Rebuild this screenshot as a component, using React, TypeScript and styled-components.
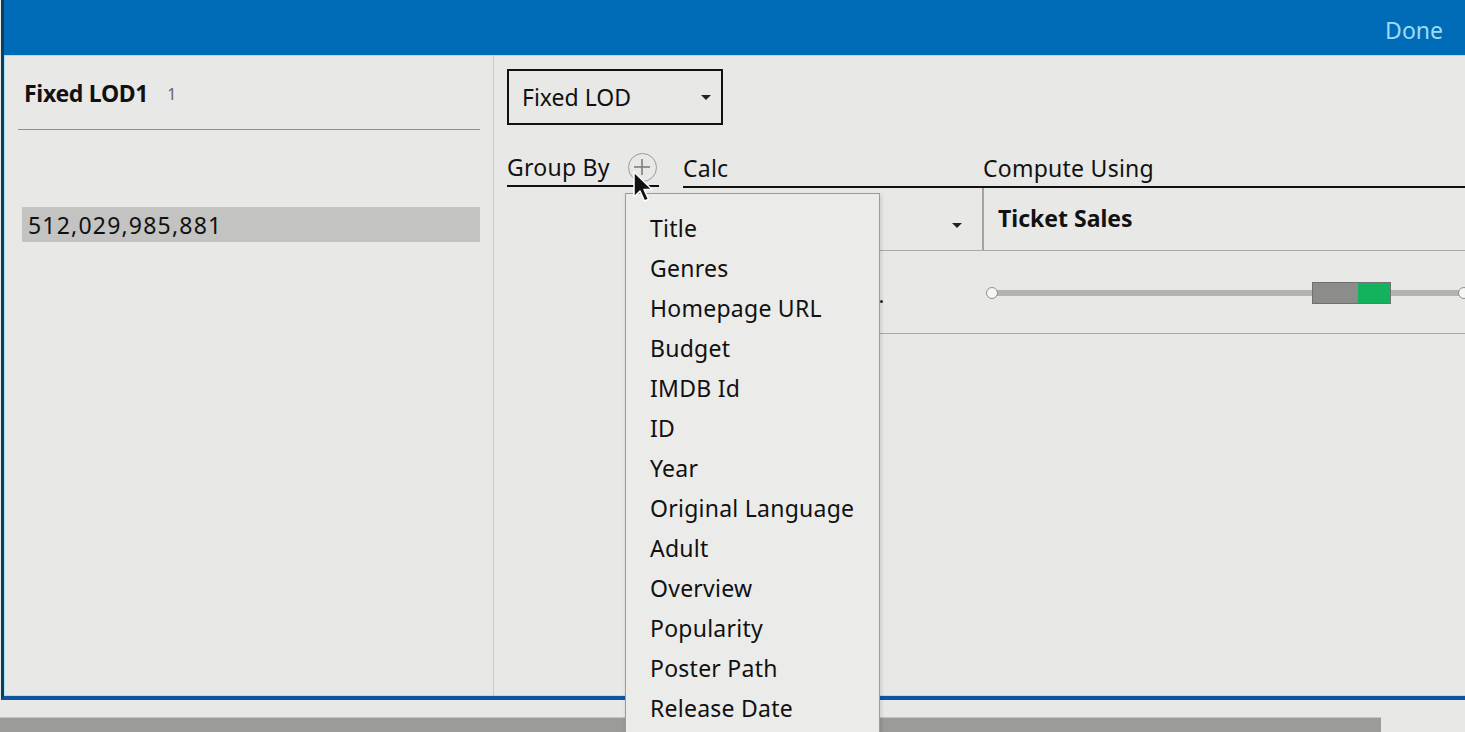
import styled, { createGlobalStyle } from "styled-components";

const GlobalStyle = createGlobalStyle`
  html, body {
    margin: 0;
    padding: 0;
    background: #e8e8e6;
    font-family: "Noto Sans", "Open Sans", sans-serif;
    color: #111;
  }
`;

const Page = styled.div`
  position: relative;
  width: 1465px;
  height: 732px;
  overflow: hidden;
  background: #e8e8e6;
`;

const Dialog = styled.div`
  display: flex;
  flex-direction: column;
  height: 700px;
  margin-left: 1px;
  border-left: 3px solid #0f3d5c;
  border-bottom: 4px solid #0a56a2;
  box-shadow: inset 1px 0 0 #a9e2f3, inset 0 -1px 0 #a9e2f3;
  box-sizing: border-box;
`;

const TitleBar = styled.div`
  height: 55px;
  flex: none;
  background: #006bb7;
  border-bottom: 1px solid #a9dff2;
  display: flex;
  align-items: center;
  justify-content: flex-end;
  padding-right: 22px;
`;

const DoneButton = styled.span`
  color: #9fdcf4;
  font-size: 23px;
  padding-top: 4px;
`;

const Body = styled.div`
  display: flex;
  flex: 1;
  min-height: 0;
`;

const LeftPane = styled.div`
  width: 462px;
  flex: none;
  padding: 0 13px 0 14px;
  border-right: 1px solid #c9c9c7;
`;

const PaneHeader = styled.div`
  height: 73px;
  display: flex;
  align-items: center;
  gap: 19px;
  padding-left: 6px;
  border-bottom: 1px solid #8e8e8c;
`;

const PaneTitle = styled.span`
  font-weight: 700;
  font-size: 23px;
  letter-spacing: -0.3px;
`;

const PaneCount = styled.span`
  font-size: 16px;
  color: #666;
  padding-top: 2px;
`;

const ValueRow = styled.div`
  margin: 77px 0 0 4px;
  height: 35px;
  background: #c3c3c1;
  display: flex;
  align-items: center;
  padding-left: 6px;
  font-size: 23px;
  letter-spacing: 1.2px;
`;

const RightPane = styled.div`
  flex: 1;
  padding-left: 13px;
`;

const CalcSelect = styled.div`
  margin-top: 13px;
  width: 216px;
  height: 56px;
  border: 2px solid #111;
  display: flex;
  align-items: center;
  justify-content: space-between;
  padding: 0 10px 0 13px;
  box-sizing: border-box;
  font-size: 23px;
`;

const Caret = styled.span`
  width: 0;
  height: 0;
  border-left: 5px solid transparent;
  border-right: 5px solid transparent;
  border-top: 5px solid #222;
`;

const ColumnHeads = styled.div`
  display: flex;
  margin-top: 24px;
  height: 39px;
`;

const HeadCell = styled.div<{ $width?: number }>`
  display: flex;
  align-items: center;
  gap: 18px;
  font-size: 23px;
  letter-spacing: 0.25px;
  width: ${({ $width }) => ($width ? `${$width}px` : "auto")};
  box-sizing: border-box;
`;

const GroupHead = styled(HeadCell)`
  border-bottom: 2px solid #111;
  margin-right: 24px;
  height: 38px;
`;

const CalcHeads = styled.div`
  flex: 1;
  display: flex;
  border-bottom: 2px solid #111;
`;

const AddCircle = styled.span`
  width: 29px;
  height: 29px;
  border-radius: 50%;
  border: 1.5px solid #9a9a98;
  box-sizing: border-box;
  display: inline-flex;
  align-items: center;
  justify-content: center;
`;

const Grid = styled.div`
  margin-left: 176px;
  display: grid;
  grid-template-columns: 299px 1fr;
`;

const Cell = styled.div<{ $h: number; $divider?: boolean }>`
  height: ${({ $h }) => $h}px;
  border-bottom: 1px solid #a9a9a7;
  border-left: ${({ $divider }) => ($divider ? "2px solid #a3a3a1" : "none")};
  display: flex;
  align-items: center;
  box-sizing: border-box;
`;

const CalcCell = styled(Cell)`
  justify-content: flex-end;
  padding: 13px 20px 0 0;
`;

const FieldName = styled.span`
  font-weight: 700;
  font-size: 23px;
  padding-left: 14px;
  padding-bottom: 2px;
`;

const SliderCell = styled(Cell)`
  padding-left: 12px;
  padding-top: 2px;
`;

const Track = styled.div`
  position: relative;
  flex: none;
  height: 6px;
  background: #b3b3b1;
  margin-left: -4px;
`;

const Knob = styled.span<{ $side: "left" | "right" }>`
  position: absolute;
  top: -3px;
  ${({ $side }) => ($side === "left" ? "left: -4px;" : "right: -8px;")}
  width: 12px;
  height: 12px;
  border-radius: 50%;
  background: #f6f6f4;
  border: 1.5px solid #8e8e8c;
  box-sizing: border-box;
`;

const Thumb = styled.div`
  position: absolute;
  top: -8px;
  height: 22px;
  display: flex;
  border: 1px solid #707070;
  box-sizing: border-box;
`;

const ThumbPart = styled.span<{ $color: string; $w: number }>`
  width: ${({ $w }) => $w}px;
  background: ${({ $color }) => $color};
`;

const Dot = styled.span`
  width: 3px;
  height: 3px;
  border-radius: 50%;
  background: #222;
  margin-left: 197px;
  margin-top: 18px;
`;

const Footer = styled.div`
  height: 32px;
  display: flex;
  flex-direction: column;
  justify-content: flex-end;
`;

const ScrollBar = styled.div`
  width: 1381px;
  height: 14px;
  background: #9b9b99;
  border-top: 1px solid #c4c4c2;
`;

const Menu = styled.ul`
  position: absolute;
  left: 625px;
  top: 193px;
  width: 255px;
  height: 600px;
  margin: 0;
  padding: 14px 0 0 24px;
  list-style: none;
  background: #ebebe9;
  border: 1px solid #9c9c9a;
  box-shadow: 1px 2px 4px rgba(0, 0, 0, 0.15);
  box-sizing: border-box;

  li {
    height: 40px;
    line-height: 40px;
    font-size: 23px;
    letter-spacing: 0.25px;
    white-space: nowrap;
  }
`;

const Cursor = styled.svg`
  position: absolute;
  left: 632px;
  top: 170px;
`;

const fields = [
  "Title",
  "Genres",
  "Homepage URL",
  "Budget",
  "IMDB Id",
  "ID",
  "Year",
  "Original Language",
  "Adult",
  "Overview",
  "Popularity",
  "Poster Path",
  "Release Date",
];

const trackWidth = 472;
const thumbLeft = 1313 - 991;

export default function App() {
  return (
    <Page>
      <GlobalStyle />
      <Dialog>
        <TitleBar>
          <DoneButton>Done</DoneButton>
        </TitleBar>
        <Body>
          <LeftPane>
            <PaneHeader>
              <PaneTitle>Fixed LOD1</PaneTitle>
              <PaneCount>1</PaneCount>
            </PaneHeader>
            <ValueRow>512,029,985,881</ValueRow>
          </LeftPane>
          <RightPane>
            <CalcSelect>
              Fixed LOD
              <Caret />
            </CalcSelect>
            <ColumnHeads>
              <GroupHead $width={152}>
                Group By
                <AddCircle>
                  <svg width="18" height="18" viewBox="0 0 18 18">
                    <path d="M9 1v16M1 9h16" stroke="#777" strokeWidth="1.5" />
                  </svg>
                </AddCircle>
              </GroupHead>
              <CalcHeads>
                <HeadCell $width={300}>Calc</HeadCell>
                <HeadCell>Compute Using</HeadCell>
              </CalcHeads>
            </ColumnHeads>
            <Grid>
              <CalcCell $h={63}>
                <Caret />
              </CalcCell>
              <Cell $h={63} $divider>
                <FieldName>Ticket Sales</FieldName>
              </Cell>
              <Cell $h={83}>
                <Dot />
              </Cell>
              <SliderCell $h={83}>
                <Track style={{ width: trackWidth }}>
                  <Knob $side="left" />
                  <Thumb style={{ left: thumbLeft }}>
                    <ThumbPart $color="#8c8c8a" $w={45} />
                    <ThumbPart $color="#12b35c" $w={32} />
                  </Thumb>
                  <Knob $side="right" />
                </Track>
              </SliderCell>
            </Grid>
          </RightPane>
        </Body>
      </Dialog>
      <Footer>
        <ScrollBar />
      </Footer>
      <Menu>
        {fields.map((f) => (
          <li key={f}>{f}</li>
        ))}
      </Menu>
      <Cursor width="24" height="36" viewBox="0 0 24 36">
        <path
          d="M2 2 L2 27 L8 21 L12.5 31 L16.5 29.2 L12 19.5 L20 19.5 Z"
          fill="#111"
          stroke="#fff"
          strokeWidth="1.5"
          strokeLinejoin="round"
        />
      </Cursor>
    </Page>
  );
}
